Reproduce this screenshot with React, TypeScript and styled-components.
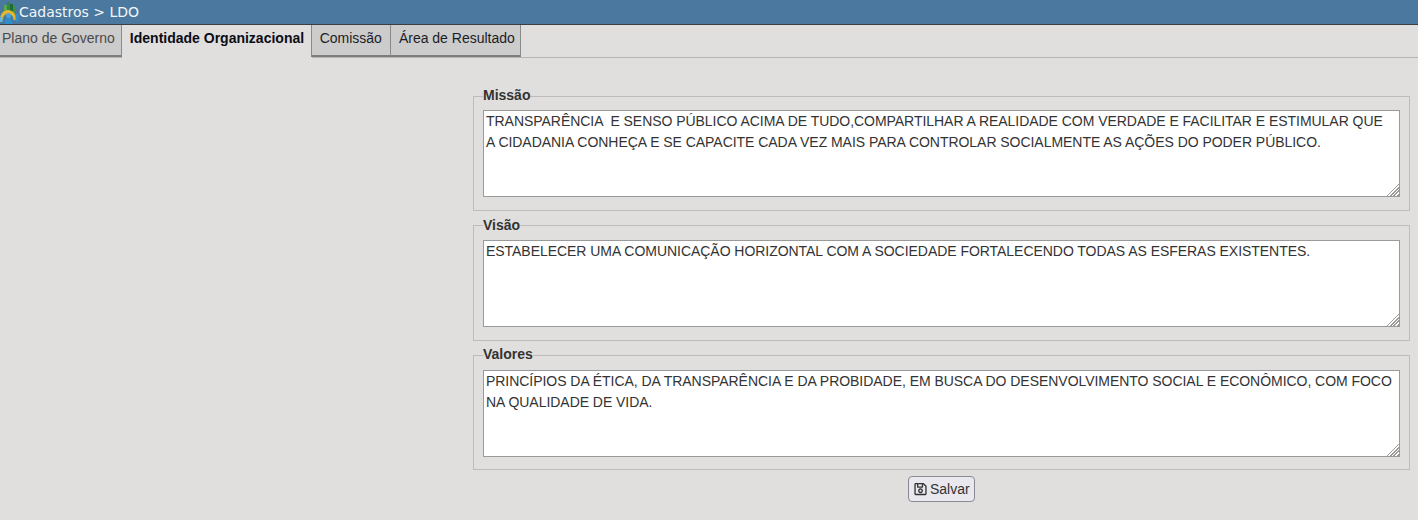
import React, { useState } from 'react';
import styled, { createGlobalStyle } from 'styled-components';
import { FaRegSave } from 'react-icons/fa';

const GlobalStyle = createGlobalStyle`
  html, body {
    margin: 0;
    padding: 0;
    background-color: #e0dfde;
    font-family: "Liberation Sans", Arial, sans-serif;
    font-size: 14px;
    color: #333;
    overflow: hidden;
  }
`;

const Page = styled.div`
  width: 1418px;
  height: 520px;
  display: flex;
  flex-direction: column;
`;

const Header = styled.header`
  height: 24px;
  display: flex;
  align-items: center;
  background-color: #4a789f;
  border-bottom: 1px solid #3a3f44;
  color: #f4f6f8;
  font-family: "DejaVu Sans", sans-serif;
  font-size: 14px;
`;

const Logo = styled.svg`
  width: 19px;
  height: 24px;
  flex: none;
`;

const TabBar = styled.nav`
  height: 32px;
  display: flex;
  align-items: flex-start;
  border-bottom: 1px solid #b5b4b3;
`;

const Tab = styled.div<{ $active?: boolean; $muted?: boolean }>`
  height: ${(p) => (p.$active ? '33px' : '32px')};
  box-sizing: border-box;
  padding: 5px ${(p) => (p.$active ? '6.5px' : '8px')} 0 ${(p) => (p.$active ? '7px' : '8px')};
  background-color: ${(p) => (p.$active ? '#e0dfde' : '#cccccc')};
  border-right: 1px solid ${(p) => (p.$active ? '#e0dfde' : '#8a8a8a')};
  border-left: 1px solid ${(p) => (p.$active ? '#e0dfde' : '#8a8a8a')};
  border-bottom: ${(p) => (p.$active ? 'none' : '2px solid #7d7d7d')};
  font-weight: ${(p) => (p.$active ? 'bold' : 'normal')};
  color: ${(p) => (p.$active ? '#0c0c14' : p.$muted ? '#4a4a4a' : '#1c1c24')};
  white-space: nowrap;
  line-height: 17px;
  margin-left: -1px;
  &:first-child {
    margin-left: 0;
    border-left: none;
    border-right-width: 2px;
    padding-left: 2px;
    padding-right: 6px;
  }
  &:last-child {
    padding-right: 5.5px;
  }
`;

const Content = styled.main`
  flex: 1;
  display: flex;
  flex-direction: column;
  align-items: center;
  width: 937px;
  margin-left: 473px;
  padding-top: 29px;
`;

const Group = styled.fieldset`
  box-sizing: border-box;
  width: 937px;
  height: 124px;
  margin: 0 0 5.7px;
  padding: 5.4px 9px 0;
  border: 1px solid #bdbcbb;
  min-inline-size: 0;
`;

const GroupTitle = styled.legend`
  padding: 0 0 2px;
  font-weight: bold;
  font-size: 14px;
  line-height: 16px;
  color: #333;
`;

const Field = styled.textarea`
  display: block;
  box-sizing: border-box;
  width: 917px;
  height: 87px;
  margin: 0;
  padding: 0 5.5px 0 2px;
  background-color: #ffffff;
  border: 1px solid #9a9a9a;
  border-radius: 0;
  outline: none;
  font-family: "Liberation Sans", Arial, sans-serif;
  font-size: 14px;
  letter-spacing: -0.04px;
  line-height: 21px;
  color: #333;
  resize: both;

  &::-webkit-resizer {
    background:
      linear-gradient(135deg, #fff 58%, transparent 58%),
      repeating-linear-gradient(135deg, #9a9a9a 0 1.4px, #fff 1.4px 2.4px);
  }
`;

const SaveButton = styled.button`
  display: flex;
  align-items: center;
  gap: 3px;
  box-sizing: border-box;
  width: 67px;
  height: 26px;
  padding: 0 0 0 5px;
  background-color: #e8e8ee;
  border: 1px solid #8a8a94;
  border-radius: 4px;
  font-family: "Liberation Sans", Arial, sans-serif;
  font-size: 14px;
  color: #333;
  svg {
    width: 13px;
    height: 14px;
  }
`;

const initial = [
  {
    title: 'Missão',
    text: 'TRANSPARÊNCIA  E SENSO PÚBLICO ACIMA DE TUDO,COMPARTILHAR A REALIDADE COM VERDADE E FACILITAR E ESTIMULAR QUE A CIDADANIA CONHEÇA E SE CAPACITE CADA VEZ MAIS PARA CONTROLAR SOCIALMENTE AS AÇÕES DO PODER PÚBLICO.',
  },
  {
    title: 'Visão',
    text: 'ESTABELECER UMA COMUNICAÇÃO HORIZONTAL COM A SOCIEDADE FORTALECENDO TODAS AS ESFERAS EXISTENTES.',
  },
  {
    title: 'Valores',
    text: 'PRINCÍPIOS DA ÉTICA, DA TRANSPARÊNCIA E DA PROBIDADE, EM BUSCA DO DESENVOLVIMENTO SOCIAL E ECONÔMICO, COM FOCO NA QUALIDADE DE VIDA.',
  },
];

export default function App() {
  const [fields] = useState(initial);

  return (
    <>
      <GlobalStyle />
      <Page>
        <Header>
          <Logo viewBox="0 0 19 24">
            <rect x="4" y="5" width="3" height="8" fill="#5aa84e" />
            <rect x="7" y="2" width="3" height="11" fill="#2f8a43" />
            <rect x="10" y="4" width="3" height="9" fill="#1f6b38" />
            <rect x="13" y="6" width="3" height="8" fill="#3f9148" />
            <path d="M0 20c0-6 3.500-10 8-10s8.500 4 8.500 10h-3c0-3.500-2-6-5.500-6s-5 2.500-5 6z" fill="#e6b52e" />
            <circle cx="8.500" cy="15.500" r="2.500" fill="#4aa3d8" />
            <path d="M4.500 24c0-4 1.700-6 4-6s4 2 4 6z" fill="#2f8fcb" />
            <rect x="15.500" y="14" width="3" height="8" fill="#2f8fcb" />
            <rect x="0" y="17" width="2.500" height="5" fill="#5db7e0" />
          </Logo>
          Cadastros &gt; LDO
        </Header>
        <TabBar>
          <Tab $muted>Plano de Governo</Tab>
          <Tab $active>Identidade Organizacional</Tab>
          <Tab>Comissão</Tab>
          <Tab>Área de Resultado</Tab>
        </TabBar>
        <Content>
          {fields.map((f) => (
            <Group key={f.title}>
              <GroupTitle>{f.title}</GroupTitle>
              <Field defaultValue={f.text} />
            </Group>
          ))}
          <SaveButton type="button">
            <FaRegSave />
            Salvar
          </SaveButton>
        </Content>
      </Page>
    </>
  );
}
